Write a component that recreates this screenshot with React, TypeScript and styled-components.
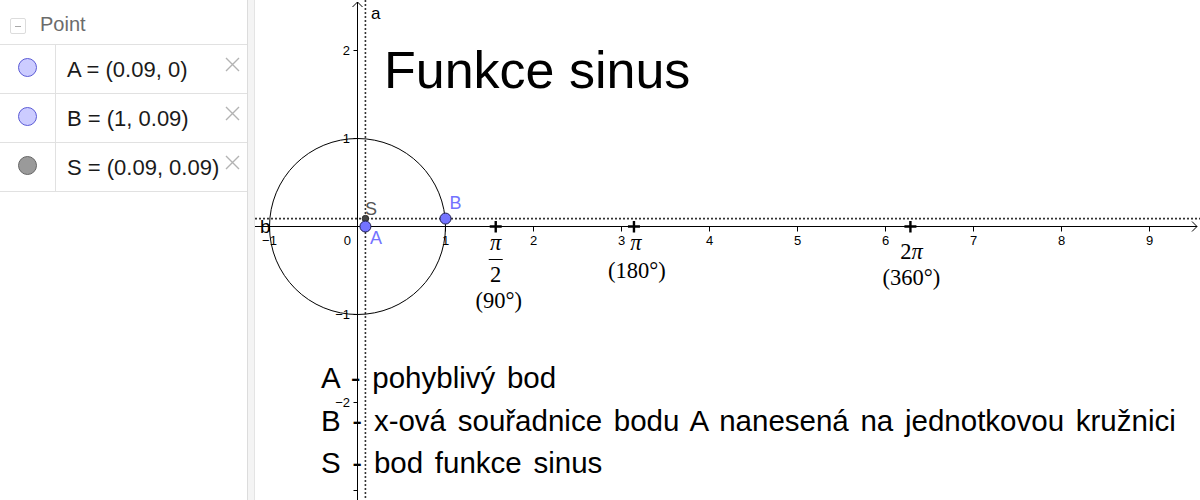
import React from "react";
import styled, { createGlobalStyle } from "styled-components";

const GlobalStyle = createGlobalStyle`
  html, body { margin: 0; padding: 0; background: #fff; }
  body { font-family: "Liberation Sans", Arial, sans-serif; overflow: hidden; }
  #root { width: 1200px; height: 500px; }
`;

const Page = styled.div`
  display: flex;
  width: 1200px;
  height: 500px;
  overflow: hidden;
  background: #fff;
`;

/* ---------- Algebra view ---------- */

const AlgebraPanel = styled.aside`
  width: 247px;
  flex: none;
  display: flex;
  flex-direction: column;
  background: #fff;
`;

const GroupHeader = styled.div`
  display: flex;
  align-items: flex-start;
  gap: 14px;
  box-sizing: border-box;
  height: 45px;
  padding: 12px 0 0 10px;
  border-bottom: 1px solid #e1e1e1;
`;

const CollapseBox = styled.span`
  margin-top: 6px;
  width: 14px;
  height: 14px;
  border: 1px solid #dcdcdc;
  border-radius: 2px;
  display: flex;
  align-items: center;
  justify-content: center;
  &::after {
    content: "";
    width: 6px;
    height: 1px;
    background: #a8a8a8;
  }
`;

const GroupTitle = styled.span`
  font-size: 20px;
  line-height: 24px;
  color: #6b6b6b;
`;

const Row = styled.div`
  display: grid;
  grid-template-columns: 56px 1fr;
  height: 49px;
  box-sizing: border-box;
  border-bottom: 1px solid #e1e1e1;
`;

const MarkerCell = styled.div`
  border-right: 1px solid #e1e1e1;
  display: flex;
  justify-content: center;
  align-items: flex-start;
  padding-top: 13px;
`;

const Marker = styled.span<{ $fill: string; $stroke: string }>`
  width: 17px;
  height: 17px;
  border-radius: 50%;
  background: ${(p) => p.$fill};
  border: 1px solid ${(p) => p.$stroke};
`;

const ContentCell = styled.div`
  display: flex;
  justify-content: space-between;
  align-items: flex-start;
  padding: 12px 7px 0 11px;
  min-width: 0;
`;

const Definition = styled.span`
  font-size: 22px;
  line-height: 26px;
  color: #1a1a1a;
  white-space: nowrap;
`;

const CloseButton = styled.span`
  flex: none;
  width: 15px;
  height: 15px;
  display: block;
`;

const CloseIcon = () => (
  <CloseButton>
    <svg width="15" height="15" viewBox="0 0 15 15">
      <path d="M1 1 L14 14 M14 1 L1 14" stroke="#b3b3b3" strokeWidth="1.4" fill="none" />
    </svg>
  </CloseButton>
);

const Splitter = styled.div`
  width: 8px;
  flex: none;
  box-sizing: border-box;
  background: #f4f4f4;
  border-left: 1px solid #dcdcdc;
  border-right: 1px solid #e4e4e4;
`;

/* ---------- Graphics view ---------- */

const GraphicsView = styled.main`
  position: relative;
  flex: 1;
  overflow: hidden;
  background: #fff;
`;

const Canvas = styled.svg`
  position: absolute;
  left: 0;
  top: 0;
  display: block;
`;

const AxisLabel = styled.text`
  font-family: "Liberation Sans", Arial, sans-serif;
  font-size: 13px;
  fill: #000;
`;

const PointLabel = styled.text<{ $color: string; $size?: number }>`
  font-family: "Liberation Sans", Arial, sans-serif;
  font-size: ${(p) => p.$size ?? 18}px;
  fill: ${(p) => p.$color};
`;

const MathText = styled.text<{ $italic?: boolean }>`
  font-family: "Liberation Serif", "Times New Roman", serif;
  font-size: 22.5px;
  font-style: ${(p) => (p.$italic ? "italic" : "normal")};
  fill: #000;
`;

const Title = styled.div`
  position: absolute;
  left: 129px;
  top: 40px;
  font-size: 52px;
  line-height: 60px;
  color: #000;
  white-space: nowrap;
`;

const Legend = styled.div`
  position: absolute;
  left: 66px;
  top: 357px;
  font-size: 29.5px;
  line-height: 42.5px;
  word-spacing: 3.5px;
  color: #000;
  white-space: nowrap;
`;

const LegendLine = styled.div``;

const OX = 357.5;
const OY = 226.5;
const U = 88;
const px = (x: number) => OX + U * x;
const py = (y: number) => OY - U * y;

const points = [
  { name: "A", def: "A = (0.09, 0)", fill: "#ccccff", stroke: "#5b5bd6" },
  { name: "B", def: "B = (1, 0.09)", fill: "#ccccff", stroke: "#5b5bd6" },
  { name: "S", def: "S = (0.09, 0.09)", fill: "#9a9a9a", stroke: "#666" },
];

const xTicks = [-1, 1, 2, 3, 4, 5, 6, 7, 8, 9];
const yTicks = [2, 1, -1, -2, -3];
const minus = "\u2212";

const Plus = ({ x }: { x: number }) => (
  <path d={`M${x - 6} ${OY} H${x + 6} M${x} ${OY - 5.5} V${OY + 6}`} stroke="#000" strokeWidth="2.4" />
);

export default function App() {
  const ax = px(0.09);
  const by = py(0.09);
  return (
    <>
      <GlobalStyle />
      <Page>
        <AlgebraPanel>
          <GroupHeader>
            <CollapseBox />
            <GroupTitle>Point</GroupTitle>
          </GroupHeader>
          {points.map((p) => (
            <Row key={p.name}>
              <MarkerCell>
                <Marker $fill={p.fill} $stroke={p.stroke} />
              </MarkerCell>
              <ContentCell>
                <Definition>{p.def}</Definition>
                <CloseIcon />
              </ContentCell>
            </Row>
          ))}
        </AlgebraPanel>
        <Splitter />
        <GraphicsView>
          <Canvas width="945" height="500" viewBox="0 0 945 500">
            <g transform="translate(-255 0)">
              {/* dotted lines a (x = 0.09) and b (y = 0.09) */}
              <line x1={ax} y1={0} x2={ax} y2={500} stroke="#333" strokeWidth="1.6" strokeDasharray="2 2" />
              <line x1={255} y1={by} x2={1200} y2={by} stroke="#333" strokeWidth="1.6" strokeDasharray="2 2" />

              {/* axes */}
              <line x1={255} y1={OY} x2={1197} y2={OY} stroke="#000" strokeWidth="1" />
              <path d={`M1192 ${OY - 5} L1197 ${OY} L1192 ${OY + 5}`} stroke="#000" strokeWidth="1" fill="none" />
              <line x1={OX} y1={2} x2={OX} y2={500} stroke="#000" strokeWidth="1" />
              <path d={`M${OX - 5} 7 L${OX} 2 L${OX + 5} 7`} stroke="#000" strokeWidth="1" fill="none" />

              {xTicks.map((k) => (
                <g key={`x${k}`}>
                  <line x1={px(k)} y1={OY} x2={px(k)} y2={OY + 5} stroke="#000" strokeWidth="1" />
                  <AxisLabel x={px(k)} y={245} textAnchor="middle">
                    {k < 0 ? `${minus}${-k}` : k}
                  </AxisLabel>
                </g>
              ))}
              <AxisLabel x={351} y={245} textAnchor="end">0</AxisLabel>
              {yTicks.map((k) => (
                <g key={`y${k}`}>
                  <line x1={OX - 4} y1={py(k)} x2={OX} y2={py(k)} stroke="#000" strokeWidth="1" />
                  {k > -3 && (
                    <AxisLabel x={350} y={py(k) + 4.5} textAnchor="end">
                      {k < 0 ? `${minus}${-k}` : k}
                    </AxisLabel>
                  )}
                </g>
              ))}

              {/* unit circle */}
              <circle cx={OX} cy={OY} r={U} fill="none" stroke="#000" strokeWidth="1" />

              {/* line labels */}
              <PointLabel $color="#000" $size={17} x={371} y={18.5}>a</PointLabel>
              <PointLabel $color="#000" $size={19} x={260} y={233}>b</PointLabel>

              {/* special angle marks */}
              <Plus x={px(Math.PI / 2)} />
              <Plus x={px(Math.PI)} />
              <Plus x={px(2 * Math.PI)} />

              <MathText $italic x={px(Math.PI / 2)} y={250} textAnchor="middle">π</MathText>
              <line x1={px(Math.PI / 2) - 7} y1={259.5} x2={px(Math.PI / 2) + 7} y2={259.5} stroke="#000" strokeWidth="1" />
              <MathText x={px(Math.PI / 2)} y={281.5} textAnchor="middle">2</MathText>
              <MathText x={px(Math.PI / 2) + 3} y={308} textAnchor="middle">(90°)</MathText>

              <MathText $italic x={px(Math.PI) + 2} y={250} textAnchor="middle">π</MathText>
              <MathText x={px(Math.PI) + 3} y={278} textAnchor="middle">(180°)</MathText>

              <MathText x={px(2 * Math.PI) + 1} y={259} textAnchor="middle">
                2<tspan fontStyle="italic">π</tspan>
              </MathText>
              <MathText x={px(2 * Math.PI) + 1} y={285} textAnchor="middle">(360°)</MathText>

              {/* points */}
              <circle cx={ax} cy={by} r={3.3} fill="#444" stroke="#222" strokeWidth="0.8" />
              <circle cx={ax} cy={OY} r={5.5} fill="#7373ff" stroke="#1e1e50" strokeWidth="1" />
              <circle cx={px(1)} cy={by} r={5.5} fill="#7373ff" stroke="#1e1e50" strokeWidth="1" />
              <PointLabel $color="#555" x={365} y={214.5}>S</PointLabel>
              <PointLabel $color="#7373ff" x={370} y={244}>A</PointLabel>
              <PointLabel $color="#7373ff" x={449.5} y={208.5}>B</PointLabel>
            </g>
          </Canvas>
          <Title>Funkce sinus</Title>
          <Legend>
            <LegendLine>A - pohyblivý bod</LegendLine>
            <LegendLine>B - x-ová souřadnice bodu A nanesená na jednotkovou kružnici</LegendLine>
            <LegendLine>S - bod funkce sinus</LegendLine>
          </Legend>
        </GraphicsView>
      </Page>
    </>
  );
}
